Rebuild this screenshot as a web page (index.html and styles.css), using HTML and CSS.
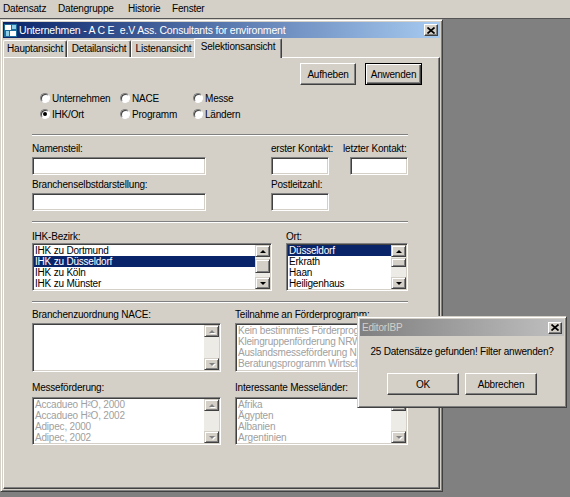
FILE: index.html
```html
<!DOCTYPE html>
<html lang="de">
<head>
<meta charset="utf-8">
<title>EditorIBP</title>
<link rel="stylesheet" href="styles.css">
</head>
<body>
<div class="menubar">
  <span class="menu-item m1">Datensatz</span>
  <span class="menu-item m2">Datengruppe</span>
  <span class="menu-item m3">Historie</span>
  <span class="menu-item m4">Fenster</span>
</div>

<div class="mdi">
  <div class="window">
    <div class="titlebar">
      <svg class="app-icon" width="13" height="13" viewBox="0 0 13 13">
        <rect x="0" y="0" width="13" height="13" fill="#1c6c9c"/>
        <rect x="1" y="1" width="6" height="5" fill="#ffffff"/>
        <rect x="6" y="7" width="6" height="5" fill="#ffffff"/>
        <rect x="2" y="7" width="3" height="5" fill="#8fd0e8"/>
        <rect x="8" y="1" width="4" height="4" fill="#8fd0e8"/>
      </svg>
      <span class="title-text main-title">Unternehmen - A C E&nbsp; e.V Ass. Consultants for environment</span>
      <span class="caption-btn">
        <svg width="8" height="7" viewBox="0 0 8 7"><path d="M0.5 0.5 L7.5 6.5 M7.5 0.5 L0.5 6.5" stroke="#000" stroke-width="1.7" fill="none"/></svg>
      </span>
    </div>

    <div class="tabs">
      <div class="tab t1">Hauptansicht</div>
      <div class="tab t2">Detailansicht</div>
      <div class="tab t3">Listenansicht</div>
      <div class="tab selected">Selektionsansicht</div>
    </div>

    <div class="panel">
      <div class="actions">
        <button class="btn b-clear">Aufheben</button>
        <button class="btn b-apply default">Anwenden</button>
      </div>

      <div class="form">
        <div class="radio-grid">
          <label class="radio"><span class="radio-dot"></span>Unternehmen</label>
          <label class="radio"><span class="radio-dot"></span>NACE</label>
          <label class="radio"><span class="radio-dot"></span>Messe</label>
          <label class="radio"><span class="radio-dot checked"></span>IHK/Ort</label>
          <label class="radio"><span class="radio-dot"></span>Programm</label>
          <label class="radio"><span class="radio-dot"></span>Ländern</label>
        </div>

        <div class="sep sep-1"></div>

        <div class="row row-a">
          <div class="field f-wide">
            <div class="label">Namensteil:</div>
            <input class="textbox" type="text">
          </div>
          <div class="field f-small f-gap1">
            <div class="label nowrap">erster Kontakt:</div>
            <input class="textbox" type="text">
          </div>
          <div class="field f-small f-gap2">
            <div class="label nowrap pull">letzter Kontakt:</div>
            <input class="textbox" type="text">
          </div>
        </div>
        <div class="row row-b">
          <div class="field f-wide">
            <div class="label">Branchenselbstdarstellung:</div>
            <input class="textbox" type="text">
          </div>
          <div class="field f-small f-gap1">
            <div class="label nowrap">Postleitzahl:</div>
            <input class="textbox" type="text">
          </div>
        </div>

        <div class="sep sep-2"></div>

        <div class="row row-c">
          <div class="field f-ihk">
            <div class="label">IHK-Bezirk:</div>
            <div class="listbox lb-48">
              <div class="items">
                <div class="item">IHK zu Dortmund</div>
                <div class="item sel">IHK zu Düsseldorf</div>
                <div class="item">IHK zu Köln</div>
                <div class="item">IHK zu Münster</div>
              </div>
              <div class="vscroll">
                <div class="sb-btn up"></div>
                <div class="sb-track"><div class="sb-thumb thumb-ihk"></div></div>
                <div class="sb-btn down"></div>
              </div>
            </div>
          </div>
          <div class="field f-ort">
            <div class="label">Ort:</div>
            <div class="listbox lb-48">
              <div class="items">
                <div class="item sel">Düsseldorf</div>
                <div class="item">Erkrath</div>
                <div class="item">Haan</div>
                <div class="item">Heiligenhaus</div>
              </div>
              <div class="vscroll">
                <div class="sb-btn up"></div>
                <div class="sb-track"><div class="sb-thumb thumb-ort"></div></div>
                <div class="sb-btn down"></div>
              </div>
            </div>
          </div>
        </div>

        <div class="sep sep-3"></div>

        <div class="row row-d">
          <div class="field f-left">
            <div class="label">Branchenzuordnung NACE:</div>
            <div class="listbox lb-49">
              <div class="items"></div>
              <div class="vscroll">
                <div class="sb-btn up off"></div>
                <div class="sb-track"></div>
                <div class="sb-btn down off"></div>
              </div>
            </div>
          </div>
          <div class="field f-right">
            <div class="label">Teilnahme an Förderprogramm:</div>
            <div class="listbox lb-49">
              <div class="items muted">
                <div class="item">Kein bestimmtes Förderprogramm</div>
                <div class="item">Kleingruppenförderung NRW</div>
                <div class="item">Auslandsmesseförderung NRW</div>
                <div class="item">Beratungsprogramm Wirtschaft</div>
              </div>
              <div class="vscroll">
                <div class="sb-btn up off"></div>
                <div class="sb-track"></div>
                <div class="sb-btn down off"></div>
              </div>
            </div>
          </div>
        </div>

        <div class="row row-e">
          <div class="field f-left">
            <div class="label">Messeförderung:</div>
            <div class="listbox lb-48">
              <div class="items muted">
                <div class="item">Accadueo H²O, 2000</div>
                <div class="item">Accadueo H²O, 2002</div>
                <div class="item">Adipec, 2000</div>
                <div class="item">Adipec, 2002</div>
              </div>
              <div class="vscroll">
                <div class="sb-btn up off"></div>
                <div class="sb-track"></div>
                <div class="sb-btn down off"></div>
              </div>
            </div>
          </div>
          <div class="field f-right">
            <div class="label">Interessante Messeländer:</div>
            <div class="listbox lb-48">
              <div class="items muted">
                <div class="item">Afrika</div>
                <div class="item">Ägypten</div>
                <div class="item">Albanien</div>
                <div class="item">Argentinien</div>
              </div>
              <div class="vscroll">
                <div class="sb-btn up off"></div>
                <div class="sb-track"></div>
                <div class="sb-btn down off"></div>
              </div>
            </div>
          </div>
        </div>
      </div>
    </div>
  </div>
</div>

<div class="dialog">
  <div class="titlebar inactive">
    <span class="title-text dlg-title">EditorIBP</span>
    <span class="caption-btn">
      <svg width="8" height="7" viewBox="0 0 8 7"><path d="M0.5 0.5 L7.5 6.5 M7.5 0.5 L0.5 6.5" stroke="#000" stroke-width="1.7" fill="none"/></svg>
    </span>
  </div>
  <div class="dlg-msg">25 Datensätze gefunden! Filter anwenden?</div>
  <div class="dlg-actions">
    <button class="btn dlg-btn">OK</button>
    <button class="btn dlg-btn">Abbrechen</button>
  </div>
</div>
</body>
</html>
```

FILE: styles.css
```css
* { box-sizing: border-box; }

html, body { margin: 0; padding: 0; }

body {
  position: relative;
  width: 570px;
  height: 497px;
  overflow: hidden;
  background: #808080;
  font-family: "Liberation Sans", Arial, sans-serif;
  font-size: 10px;
  letter-spacing: -0.2px;
  color: #000;
}

/* ---------- application menu ---------- */
.menubar {
  height: 18px;
  background: #d4d0c8;
  display: flex;
  align-items: center;
  padding: 0 0 1px 3px;
}
.menu-item { display: inline-block; line-height: 12px; }
.m1 { width: 55px; }
.m2 { width: 70px; }
.m3 { width: 44px; }

/* ---------- MDI client area ---------- */
.mdi {
  height: 479px;
  border-top: 1px solid #555;
}

/* ---------- child window ---------- */
.window {
  width: 443px;
  height: 473px;
  background: #d4d0c8;
  border: 1px solid;
  border-color: #d4d0c8 #404040 #404040 #d4d0c8;
  box-shadow: inset 1px 1px 0 #fff, inset -1px -1px 0 #808080;
  padding: 2px;
  display: flex;
  flex-direction: column;
}

.titlebar {
  height: 16px;
  flex: none;
  display: flex;
  align-items: center;
  background: linear-gradient(to right, #0a246a, #a6caf0);
  color: #fff;
}
.app-icon { margin: 0 2px 0 1px; flex: none; }
.title-text { flex: 1; white-space: nowrap; line-height: 12px; }
.main-title { font-size: 10.5px; letter-spacing: -0.2px; }

.caption-btn {
  width: 14px;
  height: 12px;
  margin-right: 2px;
  flex: none;
  display: flex;
  align-items: center;
  justify-content: center;
  background: #d4d0c8;
  border: 1px solid;
  border-color: #fff #404040 #404040 #fff;
  box-shadow: inset -1px -1px 0 #808080;
}

/* ---------- tab strip ---------- */
.tabs {
  height: 19px;
  flex: none;
  display: flex;
  align-items: flex-end;
  position: relative;
  z-index: 1;
}
.tab {
  height: 17px;
  line-height: 15px;
  text-align: center;
  white-space: nowrap;
  border-top: 1px solid #fff;
  border-left: 1px solid #fff;
  border-right: 1px solid #404040;
  border-top-left-radius: 2px;
  border-top-right-radius: 2px;
  box-shadow: inset -1px 0 0 #808080;
  background: #d4d0c8;
}
.t1 { width: 64px; }
.t2 { width: 64px; }
.t3 { width: 65px; }
.tab.selected {
  width: 88px;
  height: 20px;
  margin-left: -2px;
  margin-bottom: -1px;
  position: relative;
  z-index: 2;
}

/* ---------- tab page ---------- */
.panel {
  flex: 1;
  position: relative;
  border-top: 1px solid #fff;
  border-left: 1px solid #fff;
  border-right: 1px solid #404040;
  border-bottom: 1px solid #404040;
  box-shadow: inset -1px -1px 0 #808080;
  padding: 5px 17px 0 28px;
}

.actions {
  display: flex;
  justify-content: flex-end;
}

.btn {
  height: 22px;
  padding: 0;
  font: inherit;
  letter-spacing: inherit;
  color: #000;
  background: #d4d0c8;
  border: 1px solid;
  border-color: #fff #404040 #404040 #fff;
  box-shadow: inset -1px -1px 0 #808080;
}
.b-clear { width: 56px; }
.b-apply { width: 57px; margin-left: 9px; }
.btn.default {
  border-color: #000;
  box-shadow: inset 1px 1px 0 #fff, inset -1px -1px 0 #404040, inset -2px -2px 0 #808080;
}

.form { width: 376px; }

/* radio options */
.radio-grid {
  margin: 5px 0 0 8px;
  display: grid;
  grid-template-columns: 80px 73px auto;
  grid-auto-rows: 16px;
}
.radio {
  display: flex;
  align-items: center;
  white-space: nowrap;
}
.radio-dot {
  width: 10px;
  height: 10px;
  flex: none;
  margin-right: 2px;
  position: relative;
  border-radius: 50%;
  background: #fff;
  border: 1px solid;
  border-color: #808080 #fff #fff #808080;
  box-shadow: inset 1px 1px 0 #404040;
}
.radio-dot.checked::after {
  content: "";
  position: absolute;
  left: 2px;
  top: 2px;
  width: 4px;
  height: 4px;
  border-radius: 50%;
  background: #000;
}

/* etched separators */
.sep {
  height: 2px;
  border-top: 1px solid #808080;
  border-bottom: 1px solid #fff;
}
.sep-1 { margin-top: 12px; }
.sep-2 { margin-top: 10px; }
.sep-3 { margin-top: 10px; }

/* field rows */
.row { display: flex; }
.row-a { margin-top: 7px; }
.row-b { margin-top: 4px; }
.row-c { margin-top: 8px; }
.row-d { margin-top: 6px; }
.row-e { margin-top: 10px; }

.field { display: flex; flex-direction: column; }
.label { height: 12px; line-height: 12px; white-space: nowrap; }
.pull { margin-left: -7px; }

.f-wide { width: 174px; }
.f-small { width: 58px; }
.f-gap1 { margin-left: 65px; }
.f-gap2 { margin-left: 21px; }
.f-ihk { width: 240px; }
.f-ort { width: 122px; margin-left: 14px; }
.f-left { width: 189px; }
.f-right { width: 173px; margin-left: 14px; }

.textbox {
  display: block;
  width: 100%;
  height: 18px;
  margin-top: 2px;
  padding: 0;
  background: #fff;
  border: 1px solid;
  border-color: #808080 #fff #fff #808080;
  box-shadow: inset 1px 1px 0 #404040, inset -1px -1px 0 #d4d0c8;
  outline: none;
}

/* list boxes */
.listbox {
  display: flex;
  background: #fff;
  border: 1px solid;
  border-color: #808080 #fff #fff #808080;
  box-shadow: inset 1px 1px 0 #404040, inset -1px -1px 0 #d4d0c8;
  padding: 1px;
}
.row-c .listbox { margin-top: 0; }
.row-d .listbox { margin-top: 2px; }
.row-e .listbox { margin-top: 3px; }
.lb-48 { height: 48px; }
.lb-49 { height: 49px; }

.items {
  flex: 1;
  min-width: 0;
  overflow: hidden;
  background: #fff;
}
.item {
  height: 11px;
  line-height: 11px;
  padding-left: 1px;
  white-space: nowrap;
  overflow: hidden;
}
.item.sel { background: #0a246a; color: #fff; }
.items.muted { color: #a0a0a0; }

/* vertical scroll bars */
.vscroll {
  width: 15px;
  flex: none;
  display: flex;
  flex-direction: column;
  background: #ecebe6;
}
.sb-btn {
  height: 12px;
  flex: none;
  display: flex;
  align-items: center;
  justify-content: center;
  background: #d4d0c8;
  border: 1px solid;
  border-color: #d4d0c8 #404040 #404040 #d4d0c8;
  box-shadow: inset 1px 1px 0 #fff, inset -1px -1px 0 #808080;
}
.sb-btn::after {
  content: "";
  width: 0;
  height: 0;
  border-left: 3px solid transparent;
  border-right: 3px solid transparent;
}
.sb-btn.up::after { border-bottom: 3px solid #000; }
.sb-btn.down::after { border-top: 3px solid #000; }
.sb-btn.off.up::after { border-bottom-color: #808080; filter: drop-shadow(1px 1px 0 #fff); }
.sb-btn.off.down::after { border-top-color: #808080; filter: drop-shadow(1px 1px 0 #fff); }

.sb-track { flex: 1; }
.sb-thumb {
  background: #d4d0c8;
  border: 1px solid;
  border-color: #d4d0c8 #404040 #404040 #d4d0c8;
  box-shadow: inset 1px 1px 0 #fff, inset -1px -1px 0 #808080;
}
.thumb-ihk { margin-top: 2px; height: 14px; }
.thumb-ort { margin-top: 1px; height: 9px; }

/* ---------- message box ---------- */
.dialog {
  position: absolute;
  left: 357px;
  top: 316px;
  width: 210px;
  height: 92px;
  background: #d4d0c8;
  border: 1px solid;
  border-color: #d4d0c8 #404040 #404040 #d4d0c8;
  box-shadow: inset 1px 1px 0 #fff, inset -1px -1px 0 #808080;
  padding: 2px;
  z-index: 5;
}
.titlebar.inactive {
  height: 17px;
  background: linear-gradient(to right, #808080, #c0c0c0);
  color: #d4d0c8;
}
.dlg-title { padding-left: 2px; }

.dlg-msg {
  margin-top: 10px;
  height: 12px;
  line-height: 12px;
  text-align: center;
  white-space: nowrap;
}
.dlg-actions {
  margin-top: 15px;
  display: flex;
  justify-content: center;
  gap: 6px;
}
.dlg-btn { width: 72px; }
```
